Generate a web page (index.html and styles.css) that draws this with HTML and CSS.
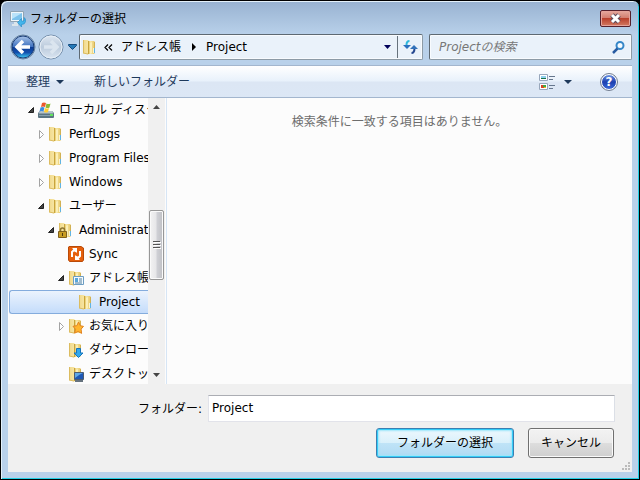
FILE: index.html
```
<!DOCTYPE html>
<html lang="ja">
<head>
<meta charset="utf-8">
<meta name="viewport" content="width=device-width, initial-scale=1">
<title>フォルダーの選択</title>
<link rel="stylesheet" href="styles.css">
</head>
<body>
<svg class="defs" aria-hidden="true">
  <defs>
    <linearGradient id="gold" x1="0" x2="1"><stop offset="0" stop-color="#f0d88a"/><stop offset="1" stop-color="#f8e8a8"/></linearGradient>
    <linearGradient id="cream" x1="0" x2="1"><stop offset="0" stop-color="#d9b64c"/><stop offset=".35" stop-color="#f6e4a0"/><stop offset="1" stop-color="#e6c768"/></linearGradient>
    <linearGradient id="navBlue" x1="0" y1="0" x2="0" y2="1"><stop offset="0" stop-color="#a9c4e8"/><stop offset=".48" stop-color="#3f72c0"/><stop offset=".5" stop-color="#0c3a92"/><stop offset=".75" stop-color="#1250ae"/><stop offset="1" stop-color="#3ed0f6"/></linearGradient>
    <linearGradient id="navPale" x1="0" y1="0" x2="0" y2="1"><stop offset="0" stop-color="#dfe8f2"/><stop offset=".5" stop-color="#bccbdc"/><stop offset="1" stop-color="#dbe6f2"/></linearGradient>
    <symbol id="folder" viewBox="0 0 16 16">
      <path d="M6 2h6l1 1v11l-1 1H6z" fill="url(#cream)"/>
      <path d="M12.500 3v8" stroke="#d2b154"/>
      <path d="M1 1h5l1 1v13l-1 .5L1 14z" fill="url(#gold)"/>
      <path d="M1.500 1v13M1 14l5 1" stroke="#dcbc60" fill="none"/>
      <path d="M6.500 2v13" stroke="#c9a43c"/>
      <path d="M8 4l2-1v11l-2 1z" fill="#fbefb9"/>
      <path d="M11 9h2v5h-2z" fill="#f9f4d5"/><path d="M12.500 9v5" stroke="#62b4e2"/>
    </symbol>
    <symbol id="drive" viewBox="0 0 16 16">
      <path d="M2 9h12l2 2v4q0 1-1 1H1q-1 0-1-1v-4z" fill="#5b7482"/><path d="M2 9h12l1.500 2.500H.5z" fill="#b5c3cb"/><path d="M1 13h11v1H1z" fill="#86a0ae"/><path d="M12 12h3v2h-3z" fill="#60e45c"/>
      <path d="M4 1q2-1 4 0L7 5Q5 4 3 5z" fill="#ec582b"/><path d="M8.500 1.500q2 1 4 0l-1 4q-2 1-4 0z" fill="#8bbb35"/><path d="M2.500 5.500q2-1 4 0l-1 4q-2-1-4 0z" fill="#3c8de0"/><path d="M7 6q2 1 4 0l-1 4q-2 1-4 0z" fill="#ffcc32"/>
    </symbol>
    <symbol id="lockfolder" viewBox="0 0 16 16">
      <use href="#folder"/><path d="M2.500 10V8q0-2 2-2t2 2v2" fill="none" stroke="#8c7430" stroke-width="1.500"/><path d="M.5 9.500h8v6h-8z" fill="#c99d24" stroke="#80601c"/><path d="M4 11h1v3H4z" fill="#4f3b0e"/>
    </symbol>
    <symbol id="sync" viewBox="0 0 16 16">
      <path d="M1 .5h12L15.500 2v12l-1 1.500H1.500L.5 14V1z" fill="#e5600d" stroke="#b94a08"/>
      <path d="M4 11V6l3-3M6 3.500l2 2M12 5v5l-3 3M10 12.500l-2-2" fill="none" stroke="#fff" stroke-width="2"/><path d="M4 2h5v5zM12 14H7V9z" fill="#fff"/>
    </symbol>
    <symbol id="contacts" viewBox="0 0 16 16">
      <use href="#folder"/><path d="M5.500 6.500h10v8h-10z" fill="#f4faff" stroke="#6c9dc2"/><path d="M7 8h3v4H7z" fill="#57a6db"/><path d="M11 9h3M11 11h3M7 13h7" stroke="#517e9c"/>
    </symbol>
    <symbol id="favorites" viewBox="0 0 16 16">
      <use href="#folder"/><path d="M10.500 4l1.800 3.700 3.200.7-2.400 2.700.5 4.300-3.400-2-3.600 1.800.9-4L5 8.300l3.800-.6z" fill="#ffb52e" stroke="#e08220"/>
    </symbol>
    <symbol id="downloads" viewBox="0 0 16 16">
      <use href="#folder"/><path d="M8.500 6.500h4V11h2.500l-4.500 4.500L6 11h2.500z" fill="#32a8ed" stroke="#1774ba"/>
    </symbol>
    <symbol id="desktop" viewBox="0 0 16 16">
      <use href="#folder"/><path d="M6.500 6.500h9v7h-9z" fill="#1e57b4" stroke="#4c5c70"/><path d="M7 7h8q-3 1-8 5z" fill="#5fa8e7"/><path d="M7 15h8" stroke="#65727e" stroke-width="2"/>
    </symbol>
    <symbol id="open" viewBox="0 0 10 10"><path d="M7.500 2.500v5h-5z" fill="#444" stroke="#222"/></symbol>
    <symbol id="closed" viewBox="0 0 10 10"><path d="M3.500 1.500v8l4-4z" fill="#fff" stroke="#a3a3a3"/></symbol>
  </defs>
</svg>

<main class="window">
  <header class="titlebar">
    <svg class="icon" viewBox="0 0 16 16" aria-hidden="true"><path d="M.5.5h13v10H.5z" fill="#eef6fb" stroke="#90a4b3"/><path d="M2 2h10v7H2z" fill="#7cc2ec"/><path d="M2 2h10L2 8z" fill="#b9e3fa"/><path d="M4 11h4v2H4zM2 13h6v2H2z" fill="#dce5eb"/><path d="M7.500 11.500l4-4V10h2.500V6.500q2 1 1.500 4t-4 3V16z" fill="#45b5eb" stroke="#2a8fca" stroke-width=".7"/></svg>
    <h1 class="title">フォルダーの選択</h1>
    <button class="close" type="button" aria-label="閉じる"><svg viewBox="0 0 13 11" width="13" height="11"><path d="M3 2l7 7M10 2l-7 7" stroke="#5c4c5c" stroke-width="5"/><path d="M3 2l7 7M10 2l-7 7" stroke="#fff" stroke-width="3"/></svg></button>
  </header>

  <nav class="navigation" aria-label="場所">
    <div class="history">
      <button type="button" aria-label="戻る"><svg viewBox="0 0 26 26" width="26" height="26"><circle cx="13" cy="13" r="12" fill="#d7e6f5" stroke="#63809f"/><circle cx="13" cy="13" r="11" fill="url(#navBlue)" stroke="#173b76"/><path d="M13 7l-6 6 6 6M8 13h12" fill="none" stroke="#fff" stroke-width="3.500"/></svg></button>
      <button type="button" aria-label="進む"><svg viewBox="0 0 26 26" width="26" height="26"><circle cx="13" cy="13" r="12" fill="url(#navPale)" stroke="#7690ac"/><circle cx="13" cy="13" r="11" fill="none" stroke="#e7eff7"/><path d="M13 7l6 6-6 6M18 13H6" fill="none" stroke="#dbe5ef" stroke-width="3.500"/></svg></button>
      <button type="button" aria-label="履歴"><svg viewBox="0 0 11 8" width="11" height="8"><path d="M1.500 1.500h8v1l-4 4-4-4z" fill="#267ab8" stroke="#174c7e"/></svg></button>
    </div>
    <div class="address">
      <svg class="icon" aria-hidden="true"><use href="#folder"/></svg>
      <a class="overflow" href="#" aria-label="上位の場所"><svg viewBox="0 0 9 7" width="9" height="7"><path d="M4 .5l-3 3 3 3M8 .5l-3 3 3 3" fill="none" stroke="#000" stroke-width="1.200"/></svg></a>
      <a href="#">アドレス帳</a>
      <svg class="crumb" viewBox="0 0 5 8" width="5" height="8" aria-hidden="true"><path d="M0 0l4 4-4 4z"/></svg>
      <a href="#">Project</a>
      <button class="drop" type="button" aria-label="以前の場所"><svg viewBox="0 0 7 4" width="7" height="4"><path d="M0 0h7L3.500 4z" fill="#00005a"/></svg></button>
      <button class="refresh" type="button" aria-label="更新"><svg viewBox="0 0 15 14" width="15" height="14"><path d="M6.500 1Q3.500 1 3.500 5" fill="none" stroke="#2fb8dc" stroke-width="2"/><path d="M0 5h8L4 9z" fill="#2a70bf"/><path d="M8.500 13q3 0 3-5" fill="none" stroke="#244790" stroke-width="2"/><path d="M7 9h8l-4-4z" fill="#3272ba"/></svg></button>
    </div>
    <label class="search">
      <input type="search" placeholder="Projectの検索" aria-label="Projectの検索">
      <svg viewBox="0 0 13 13" width="13" height="13" aria-hidden="true"><circle cx="8" cy="4.500" r="3.500" fill="#f5fbff" stroke="#3687c8" stroke-width="2"/><path d="M5.500 7.500L1 12" stroke="#295ca2" stroke-width="2.500"/></svg>
    </label>
  </nav>

  <section class="client">
    <div class="toolbar">
      <button type="button">整理<svg viewBox="0 0 8 4" width="8" height="4"><path d="M0 0h8L4 4z" fill="#1e395b"/></svg></button>
      <button type="button">新しいフォルダー</button>
      <button class="view" type="button" aria-label="表示方法"><svg viewBox="0 0 16 16" width="16" height="16"><path d="M.5.5h8v6h-8zM.5 9.500h8v6h-8z" fill="#fff" stroke="#97a6bb"/><path d="M2 2h5v2H2z" fill="#8fd0ee"/><path d="M2 4h5v1H2z" fill="#18734b"/><path d="M2 11h3v3H2z" fill="#d84228"/><path d="M4 11h3v2H4z" fill="#41a744"/><path d="M5 13h2v1H5z" fill="#f1b81d"/><path d="M10 2.500h6M10 5.500h4M10 11.500h6M10 14.500h4" stroke="#65768d"/></svg></button>
      <button type="button" aria-label="その他のオプション"><svg viewBox="0 0 8 4" width="8" height="4"><path d="M0 0h8L4 4z" fill="#1e395b"/></svg></button>
      <button class="help" type="button" aria-label="ヘルプ">?</button>
    </div>

    <div class="panes">
      <ul class="tree">
        <li class="level0"><svg class="arrow"><use href="#open"/></svg><svg class="icon"><use href="#drive"/></svg><a href="#">ローカル ディスク</a></li>
        <li class="level1"><svg class="arrow"><use href="#closed"/></svg><svg class="icon"><use href="#folder"/></svg><a href="#">PerfLogs</a></li>
        <li class="level1"><svg class="arrow"><use href="#closed"/></svg><svg class="icon"><use href="#folder"/></svg><a href="#">Program Files</a></li>
        <li class="level1"><svg class="arrow"><use href="#closed"/></svg><svg class="icon"><use href="#folder"/></svg><a href="#">Windows</a></li>
        <li class="level1"><svg class="arrow"><use href="#open"/></svg><svg class="icon"><use href="#folder"/></svg><a href="#">ユーザー</a></li>
        <li class="level2"><svg class="arrow"><use href="#open"/></svg><svg class="icon"><use href="#lockfolder"/></svg><a href="#">Administrator</a></li>
        <li class="level3"><svg class="arrow"></svg><svg class="icon"><use href="#sync"/></svg><a href="#">Sync</a></li>
        <li class="level3"><svg class="arrow"><use href="#open"/></svg><svg class="icon"><use href="#contacts"/></svg><a href="#">アドレス帳</a></li>
        <li class="level4 selected"><svg class="arrow"></svg><svg class="icon"><use href="#folder"/></svg><a href="#">Project</a></li>
        <li class="level3"><svg class="arrow"><use href="#closed"/></svg><svg class="icon"><use href="#favorites"/></svg><a href="#">お気に入り</a></li>
        <li class="level3"><svg class="arrow"></svg><svg class="icon"><use href="#downloads"/></svg><a href="#">ダウンロード</a></li>
        <li class="level3"><svg class="arrow"></svg><svg class="icon"><use href="#desktop"/></svg><a href="#">デスクトップ</a></li>
      </ul>
      <div class="scrollbar">
        <button type="button" aria-label="上へスクロール"><svg viewBox="0 0 7 4" width="7" height="4"><path d="M0 4h7L3.500 0z" fill="#444"/></svg></button>
        <div class="track"><div class="thumb"><svg viewBox="0 0 8 8" width="8" height="8"><path d="M0 .5h7M0 3.500h7M0 6.500h7" stroke="#555"/><path d="M1 1.500h7M1 4.500h7M1 7.500h7" stroke="#fff"/></svg></div></div>
        <button type="button" aria-label="下へスクロール"><svg viewBox="0 0 7 4" width="7" height="4"><path d="M0 0h7L3.500 4z" fill="#444"/></svg></button>
      </div>
      <p class="results">検索条件に一致する項目はありません。</p>
    </div>

    <form class="footer">
      <div class="field">
        <label for="folder-name">フォルダー:</label>
        <input id="folder-name" type="text" value="Project">
      </div>
      <div class="actions">
        <button class="primary" type="button">フォルダーの選択</button>
        <button class="cancel" type="button">キャンセル</button>
      </div>
      <svg class="grip" viewBox="0 0 8 8" width="8" height="8" aria-hidden="true"><path d="M6 0h2v2H6zM3 3h2v2H3zM6 3h2v2H6zM0 6h2v2H0zM3 6h2v2H3zM6 6h2v2H6z" fill="#bbb"/></svg>
    </form>
  </section>
</main>
</body>
</html>
```
FILE: styles.css
```
* { box-sizing: border-box; }
html { height: 100%; background: #000; }
body {
  height: 100%;
  margin: 0;
  color: #000;
  font: 12px/16px "DejaVu Sans", "Noto Sans CJK JP", sans-serif;
}
button, input { font: inherit; color: inherit; }
button {
  display: flex;
  align-items: center;
  justify-content: center;
  margin: 0;
  padding: 0;
  border: 0;
  background: none;
}
a { color: inherit; text-decoration: none; white-space: nowrap; }
svg { display: block; flex: none; }
.defs { position: absolute; width: 0; height: 0; }
.icon { width: 16px; height: 16px; }

.window {
  display: flex;
  flex-direction: column;
  height: 100%;
  padding: 0 6px 6px;
  border: 1px solid #000;
  border-radius: 7px 7px 0 0;
  box-shadow: inset 1px 1px #e4f1fa, inset -1px -1px #22cfe5;
  background: linear-gradient(#98b2d1, #b9d1ea 34px, #b9d1ea);
}

.titlebar {
  display: flex;
  align-items: center;
  gap: 4px;
  height: 33px;
  padding: 2px 2px 0 3px;
}
.title { margin: 0; font-size: 12px; font-weight: 400; line-height: 16px; }
.close {
  width: 31px;
  height: 17px;
  margin-left: auto;
  border: 1px solid #55202b;
  border-radius: 2px;
  box-shadow: inset 0 0 0 1px #e5a39a;
  background: linear-gradient(#e5a99e, #d27c6d 48%, #b9402c 50%, #d37a62);
}

.navigation {
  display: grid;
  grid-template-columns: 71px minmax(0, 344fr) minmax(0, 209fr);
  height: 24px;
  padding: 0 1px;
}
.history { display: flex; align-items: center; padding-left: 2px; }
.history button:nth-child(2) { margin-left: 2px; }
.history button:nth-child(3) { margin-left: 3px; }
.address, .search {
  display: flex;
  align-items: center;
  border: 1px solid #8d9ba6;
  border-top-color: #5e6972;
  border-left-color: #5e6972;
  border-radius: 2px;
  background: #eaf2fa;
  box-shadow: inset 0 0 0 1px #f8fbfe;
}
.address { padding-left: 2px; }
.overflow { margin: 0 8px 0 6px; }
.crumb { margin: 0 9px 0 11px; }
.drop { width: 20px; height: 22px; margin-left: auto; }
.refresh { width: 25px; height: 22px; border-left: 1px solid #66727c; }
.search { margin-left: 6px; padding: 0 6px 0 9px; }
.search input {
  flex: 1;
  min-width: 0;
  padding: 0;
  border: 0;
  outline: 0;
  background: none;
}
.search input::placeholder { color: #777; font-style: italic; opacity: 1; }

.client {
  display: flex;
  flex: 1;
  flex-direction: column;
  min-height: 0;
  margin-top: 7px;
  padding: 0 1px 1px;
}
.toolbar {
  display: flex;
  align-items: center;
  height: 33px;
  padding: 0 15px 0 18px;
  border: solid #a3b6ce;
  border-width: 1px 0;
  color: #1e395b;
  background: linear-gradient(#fff, #e8f1fb 49%, #dce6f4 51%, #dce7f5);
}
.toolbar button { gap: 6px; }
.toolbar button:nth-child(2) { margin-left: 30px; }
.toolbar .view { margin-left: auto; }
.toolbar .view + button { margin: 0 29px 0 9px; }
.toolbar .help {
  width: 16px;
  height: 16px;
  border: 1px solid #fff;
  border-radius: 50%;
  outline: 1px solid #727d90;
  color: #fff;
  font-weight: 700;
  background: linear-gradient(#6c92e0, #1c3fb0 50%, #3d6ad6);
}

.panes { display: flex; flex: 1; min-height: 0; background: #fcfcfc; }
.tree {
  width: 140px;
  margin: 0;
  padding: 0;
  overflow: hidden;
  list-style: none;
}
.tree li { display: flex; align-items: center; height: 24px; border: 1px solid transparent; border-right: 0; }
.arrow { width: 10px; height: 10px; margin-right: 2px; }
.tree a { margin-left: 5px; }
.level0 { padding-left: 17px; }
.level1 { padding-left: 27px; }
.level2 { padding-left: 37px; }
.level3 { padding-left: 47px; }
.level4 { padding-left: 57px; }
.tree .selected {
  margin-left: 1px;
  padding-left: 56px;
  border-color: #84acdd;
  border-radius: 3px 0 0 3px;
  background: linear-gradient(#ebf3fd, #c4dcfb);
}
.scrollbar { display: flex; flex-direction: column; width: 18px; padding: 0 1px; border-right: 1px solid #fcfcfc; background: #f0f0f0; }
.scrollbar button { height: 18px; }
.track { display: flex; flex: 1; flex-direction: column; }
.track::before { flex: 94; content: ""; }
.track::after { flex: 86; content: ""; }
.thumb {
  display: flex;
  flex: 68;
  align-items: center;
  justify-content: center;
  border: 1px solid #979797;
  border-radius: 2px;
  box-shadow: inset 0 0 0 1px #fafafa;
  background: linear-gradient(90deg, #f3f3f3, #e6e6e8 48%, #d0d1d6 52%, #bfc0c4);
}
.results {
  flex: 1;
  min-width: 0;
  margin: 0;
  padding: 16px 8px;
  border-left: 1px solid #d6e5f5;
  color: #6d6d6d;
  text-align: center;
}

.footer {
  position: relative;
  padding: 11px 17px 14px 130px;
  background: #f0f0f0;
}
.field { display: flex; align-items: center; gap: 6px; }
.field input {
  flex: 1;
  min-width: 0;
  height: 27px;
  padding: 0 3px 2px;
  border: 1px solid #e2e3ea;
  border-top-color: #abadb3;
  border-right-color: #dbdfe6;
  outline: 0;
  background: #fff;
}
.actions { display: flex; justify-content: flex-end; gap: 14px; margin: 6px 1px 0 0; }
.actions button { height: 30px; border: 1px solid #707070; border-radius: 3px; }
.actions .primary {
  width: 138px;
  border-color: #3c7fb1;
  box-shadow: inset 0 0 0 1px #35cdf8, inset 0 0 2px 2px #9be5fa;
  background: linear-gradient(#eef8fd, #d9f0fb 49%, #bfe3f7 51%, #b0daf3);
}
.actions .cancel {
  width: 86px;
  box-shadow: inset 0 0 0 1px #fafafa;
  background: linear-gradient(#f2f2f2, #ebebeb 49%, #dddddd 51%, #cfcfcf);
}
.grip { position: absolute; right: 2px; bottom: 2px; }
```
